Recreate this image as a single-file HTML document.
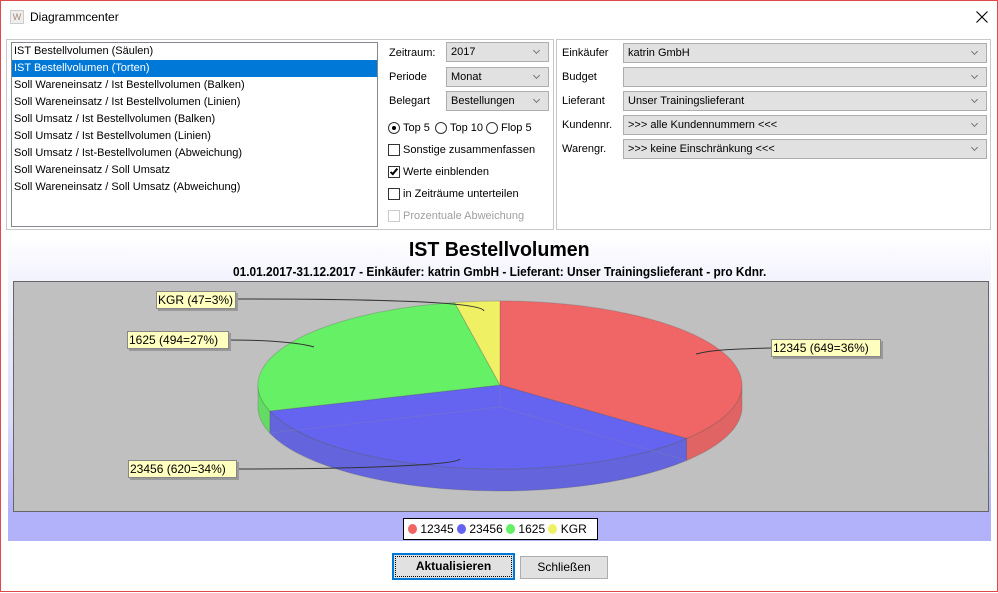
<!DOCTYPE html>
<html><head><meta charset="utf-8"><style>
*{box-sizing:border-box;margin:0;padding:0}
body{width:998px;height:592px;background:#fff;font-family:"Liberation Sans",sans-serif;font-size:11px;color:#000;position:relative;overflow:hidden;border:1px solid #e0484c}
.a{position:absolute}
.grp{position:absolute;border:1px solid #c8c8c8}
.list{position:absolute;left:10px;top:41px;width:367px;height:185px;border:1px solid #828790;background:#fff}
.list div{height:17px;line-height:17px;padding-left:2px;white-space:nowrap}
.list .sel{background:#0078d7;color:#fff}
.cb{position:absolute;height:20px;background:#e1e1e1;border:1px solid #adadad;line-height:18px;padding-left:4px}
.cb:after{content:"";position:absolute;right:9px;top:5px;width:4px;height:4px;border-right:1px solid #777;border-bottom:1px solid #777;transform:rotate(45deg)}
.lbl{position:absolute;line-height:14px}
.chk{position:absolute;width:12px;height:12px;border:1px solid #333;background:#fff}
.rad{position:absolute;width:12px;height:12px;border:1px solid #333;border-radius:50%;background:#fff}
.tag{position:absolute;background:#ffffc0;border:1px solid #888;box-shadow:2px 2px 0 #999;font-size:12px;line-height:16px;padding:0 1px;white-space:nowrap;overflow:hidden}
.tag span{display:inline-block;transform:scaleX(1);transform-origin:0 0}
</style></head><body>
<div class="a" style="left:9px;top:9px;width:14px;height:14px;background:#eee;border:1px solid #ccc;font-size:9px;color:#a87;text-align:center;line-height:12px">W</div>
<div class="a" style="left:29px;top:9px;font-size:12px">Diagrammcenter</div>
<svg class="a" style="left:975px;top:10px" width="12" height="12"><path d="M0.5,0.5 L11.5,11.5 M11.5,0.5 L0.5,11.5" stroke="#000" stroke-width="1.1"/></svg>

<div class="grp" style="left:5px;top:38px;width:548px;height:191px"></div>
<div class="grp" style="left:555px;top:38px;width:435px;height:191px"></div>

<div class="list">
<div>IST Bestellvolumen (Säulen)</div>
<div class="sel">IST Bestellvolumen (Torten)</div>
<div>Soll Wareneinsatz / Ist Bestellvolumen (Balken)</div>
<div>Soll Wareneinsatz / Ist Bestellvolumen (Linien)</div>
<div>Soll Umsatz / Ist Bestellvolumen (Balken)</div>
<div>Soll Umsatz / Ist Bestellvolumen (Linien)</div>
<div>Soll Umsatz / Ist-Bestellvolumen (Abweichung)</div>
<div>Soll Wareneinsatz / Soll Umsatz</div>
<div>Soll Wareneinsatz / Soll Umsatz (Abweichung)</div>
</div>

<div class="lbl" style="left:388px;top:45px">Zeitraum:</div>
<div class="cb" style="left:445px;top:41px;width:103px">2017</div>
<div class="lbl" style="left:388px;top:69px">Periode</div>
<div class="cb" style="left:445px;top:66px;width:103px">Monat</div>
<div class="lbl" style="left:388px;top:93px">Belegart</div>
<div class="cb" style="left:445px;top:90px;width:103px">Bestellungen</div>

<div class="rad" style="left:387px;top:121px"><div style="position:absolute;left:3px;top:3px;width:4px;height:4px;border-radius:50%;background:#000"></div></div>
<div class="lbl" style="left:402px;top:120px">Top 5</div>
<div class="rad" style="left:434px;top:121px"></div>
<div class="lbl" style="left:449px;top:120px">Top 10</div>
<div class="rad" style="left:485px;top:121px"></div>
<div class="lbl" style="left:500px;top:120px">Flop 5</div>

<div class="chk" style="left:387px;top:143px"></div>
<div class="lbl" style="left:402px;top:142px">Sonstige zusammenfassen</div>
<div class="chk" style="left:387px;top:165px"><div style="position:absolute;left:3px;top:0px;width:4px;height:8px;border-right:2px solid #000;border-bottom:2px solid #000;transform:rotate(40deg)"></div></div>
<div class="lbl" style="left:402px;top:164px">Werte einblenden</div>
<div class="chk" style="left:387px;top:187px"></div>
<div class="lbl" style="left:402px;top:186px">in Zeiträume unterteilen</div>
<div class="chk" style="left:387px;top:209px;border-color:#ccc"></div>
<div class="lbl" style="left:402px;top:208px;color:#a0a0a0">Prozentuale Abweichung</div>

<div class="lbl" style="left:561px;top:45px">Einkäufer</div>
<div class="cb" style="left:622px;top:42px;width:364px">katrin GmbH</div>
<div class="lbl" style="left:561px;top:69px">Budget</div>
<div class="cb" style="left:622px;top:66px;width:364px"></div>
<div class="lbl" style="left:561px;top:93px">Lieferant</div>
<div class="cb" style="left:622px;top:90px;width:364px">Unser Trainingslieferant</div>
<div class="lbl" style="left:561px;top:117px">Kundennr.</div>
<div class="cb" style="left:622px;top:114px;width:364px">&gt;&gt;&gt; alle Kundennummern &lt;&lt;&lt;</div>
<div class="lbl" style="left:561px;top:141px">Warengr.</div>
<div class="cb" style="left:622px;top:138px;width:364px">&gt;&gt;&gt; keine Einschränkung &lt;&lt;&lt;</div>

<div class="a" style="left:7px;top:237px;width:983px;height:303px;background:linear-gradient(#fff 0%,#f4f4fe 12%,#dcdcfc 60%,#b2b2fb 90%,#b2b2fb 100%)"></div>
<div class="a" style="left:7px;top:237px;width:983px;text-align:center;font-size:20px;font-weight:bold;line-height:24px"><span style="display:inline-block;transform:scaleX(0.98)">IST Bestellvolumen</span></div>
<div class="a" style="left:7px;top:264px;width:983px;text-align:center;font-size:12.5px;font-weight:bold;line-height:15px"><span style="display:inline-block;transform:scaleX(0.95)">01.01.2017-31.12.2017 - Einkäufer: katrin GmbH - Lieferant: Unser Trainingslieferant - pro Kdnr.</span></div>
<div class="a" style="left:12px;top:280px;width:976px;height:231px;background:#c0c0c0;border:1px solid #666"></div>

<svg class="a" style="left:0;top:0" width="998" height="592">
<g stroke="rgba(80,80,80,0.25)" stroke-width="1">
<path d="M741,384 A242,84 0 0 1 685.5,437.5 L685.5,459.5 A242,84 0 0 0 741,406 Z" fill="#e06464"/>
<path d="M685.5,437.5 A242,84 0 0 1 268.8,410 L268.8,432 A242,84 0 0 0 685.5,459.5 Z" fill="#6464dc"/>
<path d="M268.8,410 A242,84 0 0 1 257,384 L257,406 A242,84 0 0 0 268.8,432 Z" fill="#64dc64"/>
<path d="M499,384 L499,300 A242,84 0 0 1 685.5,437.5 Z" fill="#f06666"/>
<path d="M499,384 L685.5,437.5 A242,84 0 0 1 268.8,410 Z" fill="#6464f0"/>
<path d="M499,384 L268.8,410 A242,84 0 0 1 453.6,301.5 Z" fill="#66f066"/>
<path d="M499,384 L453.6,301.5 A242,84 0 0 1 499,300 Z" fill="#f0f064"/>
<path d="M499,384 L499,406 M499,406 L685.5,459.5 M499,406 L268.8,432" stroke="rgba(120,120,200,0.5)"/>
</g>
<g fill="none" stroke="#333" stroke-width="1">
<path d="M236,298 C360,298 480,300 483,310"/>
<path d="M228,339 C270,339 300,342 313,346"/>
<path d="M770,347 C730,348 710,349 695,353"/>
<path d="M236,468 C360,468 455,464 459,458"/>
</g>
</svg>
<div class="tag" style="left:155px;top:290px;width:80px"><span>KGR (47=3%)</span></div>
<div class="tag" style="left:126px;top:330px;width:102px"><span>1625 (494=27%)</span></div>
<div class="tag" style="left:770px;top:338px;width:110px"><span>12345 (649=36%)</span></div>
<div class="tag" style="left:127px;top:459px;width:109px"><span>23456 (620=34%)</span></div>

<div class="a" style="left:402px;top:517px;width:195px;height:22px;background:#fff;border:1px solid #000;font-size:12px;line-height:20px;padding-left:4px;white-space:nowrap;overflow:hidden">
<span style="display:inline-block;width:9px;height:10px;border-radius:50%;background:#f06464;vertical-align:-1px"></span> 12345
<span style="display:inline-block;width:9px;height:10px;border-radius:50%;background:#6464f0;vertical-align:-1px"></span> 23456
<span style="display:inline-block;width:9px;height:10px;border-radius:50%;background:#64f064;vertical-align:-1px"></span> 1625
<span style="display:inline-block;width:9px;height:10px;border-radius:50%;background:#f0f064;vertical-align:-1px"></span> KGR</div>

<div class="a" style="left:391px;top:552px;width:123px;height:27px;border:2px solid #0078d7;background:#e1e1e1;text-align:center;line-height:23px;font-size:12px;font-weight:bold"><div style="position:absolute;inset:1px;border:1px dotted #000"></div>Aktualisieren</div>
<div class="a" style="left:519px;top:555px;width:88px;height:23px;border:1px solid #adadad;background:#e1e1e1;text-align:center;line-height:21px;font-size:12px">Schließen</div>
</body></html>
